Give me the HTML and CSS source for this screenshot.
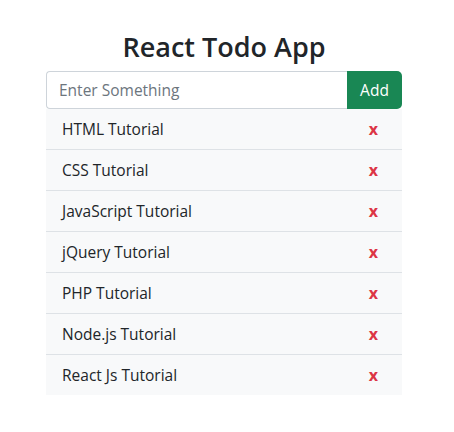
FILE: index.html
```html
<!DOCTYPE html>
<html>
<head>
<meta charset="utf-8">
<link rel="stylesheet" href="styles.css">
</head>
<body>
<div class="app">
  <h1 class="title">React Todo App</h1>
  <div class="input-group">
    <input class="field" type="text" placeholder="Enter Something">
    <button class="add">Add</button>
  </div>
  <ul class="list">
    <li class="item"><span>HTML Tutorial</span><span class="del">x</span></li>
    <li class="item"><span>CSS Tutorial</span><span class="del">x</span></li>
    <li class="item"><span>JavaScript Tutorial</span><span class="del">x</span></li>
    <li class="item"><span>jQuery Tutorial</span><span class="del">x</span></li>
    <li class="item"><span>PHP Tutorial</span><span class="del">x</span></li>
    <li class="item"><span>Node.js Tutorial</span><span class="del">x</span></li>
    <li class="item"><span>React Js Tutorial</span><span class="del">x</span></li>
  </ul>
</div>
</body>
</html>
```
FILE: styles.css
```css
html, body {
  margin: 0;
  padding: 0;
  background: #fff;
}
body {
  font-family: "Open Sans", "Noto Sans", sans-serif;
  color: #212529;
}
.app {
  width: 356px;
  margin: 0 0 0 46px;
  padding-top: 30px;
}
.title {
  margin: 0 0 8px;
  text-align: center;
  font-size: 27px;
  font-weight: 600;
  line-height: 33px;
}
.input-group {
  display: flex;
  height: 38px;
}
.field {
  flex: 1;
  min-width: 0;
  box-sizing: border-box;
  border: 1px solid #ced4da;
  border-right: none;
  border-radius: 4px 0 0 4px;
  padding: 0 12px;
  font-family: inherit;
  font-size: 15.5px;
  color: #212529;
  outline: none;
}
.field::placeholder {
  color: #6c757d;
}
.add {
  width: 55px;
  border: none;
  border-radius: 0 5px 5px 0;
  background: #198754;
  color: #fff;
  font-family: inherit;
  font-size: 15.5px;
  padding: 0;
}
.list {
  list-style: none;
  margin: 0;
  padding: 0;
}
.item {
  display: flex;
  justify-content: space-between;
  align-items: center;
  height: 40px;
  padding: 0 24px 0 16px;
  background: #f8f9fa;
  border-bottom: 1px solid #dee2e6;
  font-size: 15.5px;
}
.item:last-child {
  border-bottom: none;
}
.del {
  color: #dc3545;
  font-weight: 700;
  font-size: 16px;
}
```
